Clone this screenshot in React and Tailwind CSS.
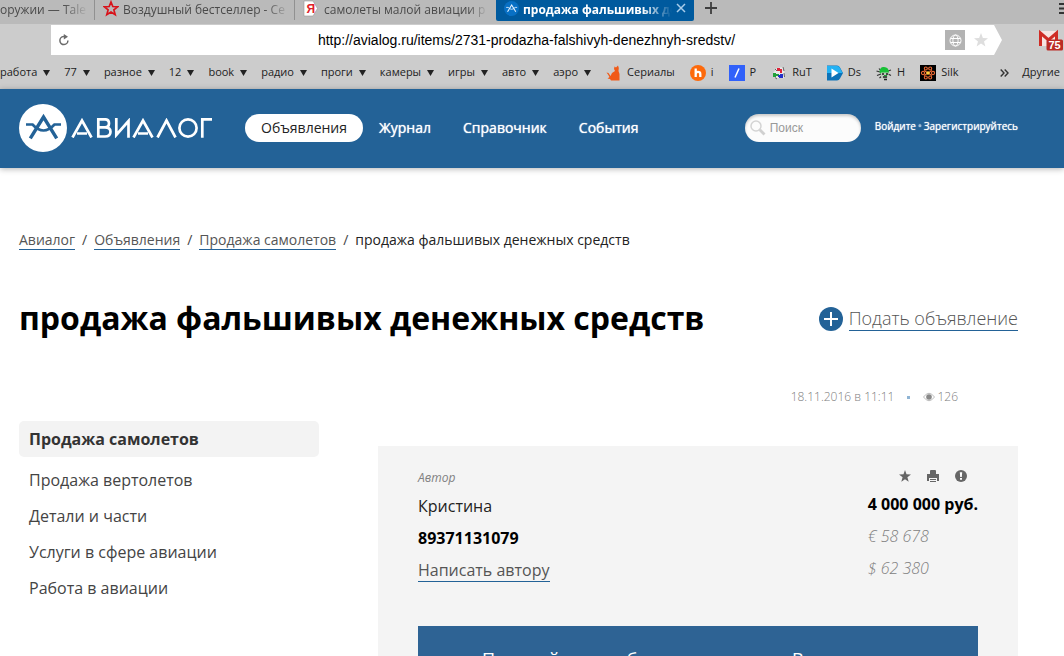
import React from "react";

const folders = ["работа", "77", "разное", "12", "book", "радио", "проги", "камеры", "игры", "авто", "аэро"];

function AvialogMark({ className, ring, mark }) {
  return (
    <svg className={className} viewBox="0 0 48 48" aria-hidden="true">
      <circle cx="24" cy="24" r="24" fill={ring} />
      <g fill="none" stroke={mark}>
        <path d="M11.300 34.300 L24.500 13 L37.700 34.300" strokeWidth="3.400" strokeLinejoin="miter" />
        <path d="M7 20.500 H13.500 Q24.500 32.500 35.500 20.500 H42" strokeWidth="2.600" />
      </g>
    </svg>
  );
}

function LogoWord() {
  return (
    <svg className="ml-1 h-5 w-[142px]" viewBox="0 0 142 20" role="img" aria-label="Авиалог">
      <g fill="none" stroke="#fff" strokeWidth="2.700">
        <path d="M1.500 19.500 L11 2.500 L20.500 19.500 M6 15.500 H16" />
        <path d="M27.300 1.300 H34 Q38 1.300 38 5.300 Q38 9.300 34 9.300 H27.300 M34 9.300 Q39.500 9.300 39.500 13.800 Q39.500 18.500 34 18.500 H27.300 V0" />
        <path d="M45.300 0 V17 L57.500 3 V19.800" />
        <path d="M62.500 19.500 L72 2.500 L81.500 19.500 M67 15.500 H77" />
        <path d="M86.500 19.500 L95.500 2.500 L104.500 19.500" />
        <circle cx="117" cy="10" r="8.600" />
        <path d="M131.300 19.800 V1.300 H141" />
      </g>
    </svg>
  );
}

function TabDivider() {
  return <span className="h-5 w-px shrink-0 bg-[#919191]" />;
}

function TabStrip() {
  return (
    <div className="flex h-6 items-start bg-[#bababa] text-xs leading-5 text-[#4a4a4a]">
      <button className="w-[94px] shrink-0 whitespace-nowrap pr-1 text-left">
        <span className="block [mask-image:linear-gradient(to_right,black_70%,transparent_98%)]">оружии — Tale</span>
      </button>
      <TabDivider />
      <button className="flex w-[199px] shrink-0 items-start gap-1 whitespace-nowrap pl-2 pr-1 text-left">
        <svg className="h-[17px] w-4 shrink-0" viewBox="0 0 16 17" aria-hidden="true">
          <path d="M8 2 L9.800 6.500 L14.700 6.800 L10.900 9.900 L12.200 14.700 L8 12 L3.800 14.700 L5.100 9.900 L1.300 6.800 L6.200 6.500 Z" fill="none" stroke="#d8131b" strokeWidth="1.700" />
        </svg>
        <span className="min-w-0 flex-1 [mask-image:linear-gradient(to_right,black_85%,transparent_100%)]">Воздушный бестселлер - Се</span>
      </button>
      <TabDivider />
      <button className="flex w-[201px] shrink-0 items-start gap-[6px] whitespace-nowrap pl-2 pr-2 text-left">
        <svg className="h-[17px] w-[15px] shrink-0" viewBox="0 0 15 17" aria-hidden="true">
          <path d="M1 1 H10 L14.500 8.500 L10 16 H1 Z" fill="#fff" stroke="#999" strokeWidth=".6" />
          <text x="3.500" y="13" fontSize="12" fontWeight="bold" fill="#e0202a" fontFamily="Liberation Sans, sans-serif">Я</text>
        </svg>
        <span className="min-w-0 flex-1 [mask-image:linear-gradient(to_right,black_88%,transparent_100%)]">самолеты малой авиации р</span>
      </button>
      <button className="flex h-[21px] w-[198px] shrink-0 items-start gap-1 whitespace-nowrap rounded-b-xs bg-[#005a9e] px-2 text-left font-bold text-white">
        <AvialogMark className="mt-px h-[15px] w-[15px] shrink-0" ring="#0870c4" mark="#e8f4ff" />
        <span className="min-w-0 flex-1 [mask-image:linear-gradient(to_right,black_80%,transparent_100%)]">продажа фальшивых де</span>
        <svg className="mt-[3px] h-[10px] w-[10px] shrink-0" viewBox="0 0 10 10" aria-hidden="true">
          <path d="M1 1 L9 9 M9 1 L1 9" stroke="#a9cdea" strokeWidth="1.500" />
        </svg>
      </button>
      <button aria-label="Новая вкладка" className="ml-[11px] mt-[2px]">
        <svg className="h-[12px] w-[12px]" viewBox="0 0 12 12" aria-hidden="true">
          <path d="M6 0 V12 M0 6 H12" stroke="#3e3e3e" strokeWidth="1.800" />
        </svg>
      </button>
      <button aria-label="Меню" className="ml-auto mt-[3px]">
        <svg className="h-[11px] w-[5px]" viewBox="0 0 5 11" aria-hidden="true">
          <path d="M0 1 H5 M0 5.500 H5 M0 10 H5" stroke="#333" strokeWidth="2" />
        </svg>
      </button>
    </div>
  );
}

function AddressBar() {
  return (
    <div className="flex h-8 items-center bg-[#cccccc] pl-[51px]">
      <div className="flex h-[30px] flex-1 items-center bg-white [clip-path:polygon(0_0,calc(100%-8px)_0,100%_50%,calc(100%-8px)_100%,0_100%)]">
        <button aria-label="Обновить" className="flex w-[60px] pl-[7px]">
          <svg className="h-3 w-3" viewBox="0 0 12 12" aria-hidden="true">
            <path d="M7.500 2.600 H5.500 A4 4 0 1 0 9.900 6.500" fill="none" stroke="#6b6b6b" strokeWidth="1.500" />
            <path d="M5.800 0 L10 2.800 L5.800 5.500 Z" fill="#6b6b6b" />
          </svg>
        </button>
        <input
          aria-label="Адрес"
          className="min-w-0 flex-1 bg-transparent text-center font-['Liberation_Sans',Arial,sans-serif] text-sm text-black outline-none"
          defaultValue="http://avialog.ru/items/2731-prodazha-falshivyh-denezhnyh-sredstv/"
        />
        <div className="flex w-[60px] items-center gap-2 pl-[3px]">
          <button aria-label="Перевести" className="flex h-5 w-5 items-center justify-center bg-[#b3b3b3]">
            <svg className="h-[13px] w-[13px]" viewBox="0 0 13 13" aria-hidden="true">
              <g fill="none" stroke="#fff" strokeWidth="1">
                <circle cx="6.500" cy="6.500" r="5.500" />
                <ellipse cx="6.500" cy="6.500" rx="2.600" ry="5.500" />
                <path d="M1.500 4.500 H11.500 M1.500 8.500 H11.500" />
              </g>
            </svg>
          </button>
          <button aria-label="В избранное">
            <svg className="block h-4 w-4" viewBox="0 0 16 16" aria-hidden="true">
              <path d="M8 1 L9.900 6 L15 6.200 L11 9.400 L12.400 14.500 L8 11.600 L3.600 14.500 L5 9.400 L1 6.200 L6.100 6 Z" fill="#dedede" />
            </svg>
          </button>
        </div>
      </div>
      <button aria-label="Почта: 75 писем" className="ml-[37px]">
        <svg className="block h-[22px] w-[25px]" viewBox="0 0 25 22" aria-hidden="true">
          <rect x="0" y="2" width="19" height="15" rx="1" fill="#f6e4e2" />
          <path d="M1.500 17 V4 L9.500 11 L17.500 4 V12" fill="none" stroke="#cf2b24" strokeWidth="3" />
          <rect x="7.500" y="10.500" width="16.500" height="11" rx="1.500" fill="#bb2b25" />
          <text x="15.500" y="20" textAnchor="middle" fontSize="11" fontWeight="bold" fill="#fff" fontFamily="Liberation Sans, sans-serif">75</text>
        </svg>
      </button>
    </div>
  );
}

function Site({ icon, label }) {
  return (
    <a href="#site" className="flex shrink-0 items-center gap-[5px]">
      {icon}
      {label}
    </a>
  );
}

const catIcon = (
  <svg className="h-4 w-4" viewBox="0 0 16 16" aria-hidden="true">
    <path d="M8 4 L8.500 1.500 L10 2.500 L12 0.500 L12.800 3 L12.500 6 L13.500 9 L13.500 15.500 H5 L4 14 L1.500 13.500 L3.500 12 L2 9.500 L0.500 7.500 L2.500 8 L4.500 11 L6 8 L9 6 Z" fill="#f05a18" />
  </svg>
);
const orangeIcon = (
  <svg className="h-4 w-4" viewBox="0 0 16 16" aria-hidden="true">
    <circle cx="8" cy="8" r="8" fill="#fd6a0c" />
    <path d="M5.700 3.500 V12 M5.700 9 Q5.700 6.900 8 6.900 Q10.300 6.900 10.300 9 V12" fill="none" stroke="#fff" strokeWidth="2.300" />
  </svg>
);
const slashIcon = (
  <svg className="h-4 w-4" viewBox="0 0 16 16" aria-hidden="true">
    <rect width="16" height="16" fill="#3161fa" />
    <path d="M6 12.500 L10 3.500" stroke="#fff" strokeWidth="1.500" />
  </svg>
);
const rutIcon = (
  <svg className="h-4 w-4" viewBox="0 0 16 16" aria-hidden="true">
    <path d="M2 8 L6 3 L12 2 L13.500 7 L13 13 L6 13 Z" fill="#e8e8e8" />
    <path d="M6 3 h3 v1 h2 v4 h-2 v-2 h-3z" fill="#dd2338" />
    <path d="M2 8 h3 v1 h3 v2 h-3 v1 h-3z" fill="#22a03a" />
    <path d="M7 10 h2 v-1 h3 v4 h-4 v-1 h-1z" fill="#2330c8" />
    <path d="M12 2 l1 4 M13 8 l0.500 4 M4 4 l2 2 M4 12.500 l2 1.500" stroke="#666" />
  </svg>
);
const dsIcon = (
  <svg className="h-4 w-4" viewBox="0 0 16 16" aria-hidden="true">
    <path d="M0 0.500 H10 Q12 0.500 13 2.500 L16 8 L13 13.500 Q12 15.500 10 15.500 H0 Z" fill="#0c72b8" />
    <path d="M0 1 H10 Q12 1 13 3 L15.500 8 H0 Z" fill="#24b2f4" />
    <path d="M4.500 3.500 L11.500 8 L4.500 12.500 Z" fill="#fff" />
  </svg>
);
const hIcon = (
  <svg className="h-4 w-4" viewBox="0 0 16 16" aria-hidden="true">
    <path d="M0.500 6 L4 7 M1 10.500 L5 9 M12 6 L15 5 M12 9 L15 10.500 M3 3.500 L5 6 M3.500 13 L6 11" stroke="#333" strokeWidth="1.200" />
    <path d="M3.500 7 Q4 1.500 8 2 Q13 2 13 8 L10 9 L5 9 Z" fill="#18c035" />
    <path d="M5 7.500 h8 l-1 5 l-2 1.500 h-3 l-2 -2z" fill="#b9c9b9" />
    <path d="M6 9 h2 M10 9 h2 M7 12 h4 M8 14.500 h3" stroke="#222" strokeWidth="1.400" />
    <path d="M8 10.500 h3" stroke="#18a030" />
  </svg>
);
const silkIcon = (
  <svg className="h-4 w-4" viewBox="0 0 16 16" aria-hidden="true">
    <rect width="16" height="16" fill="#000" />
    <g fill="none" stroke="#ec6a34" strokeWidth="1.100">
      <circle cx="5.800" cy="3.500" r="1.500" />
      <circle cx="10.200" cy="3.500" r="1.500" />
      <circle cx="5.800" cy="12.500" r="1.500" />
      <circle cx="10.200" cy="12.500" r="1.500" />
      <circle cx="3" cy="8" r="1.600" />
      <circle cx="13" cy="8" r="1.600" />
      <path d="M4 5.500 L12 10.500 M12 5.500 L4 10.500" />
    </g>
    <circle cx="8" cy="8" r="1.800" fill="#ffd23c" />
  </svg>
);

function Bookmarks() {
  return (
    <nav aria-label="Закладки" className="flex h-[33px] items-center overflow-hidden whitespace-nowrap bg-[#cccccc] text-[11px] text-[#222222]">
      <div className="flex shrink-0 items-center gap-[14px]">
        {folders.map((name) => (
          <button key={name} className="flex items-center gap-[6px]">
            {name}
            <svg className="h-[6px] w-[7px]" viewBox="0 0 7 6" aria-hidden="true">
              <path d="M0 0 H7 L3.500 6 Z" fill="#222" />
            </svg>
          </button>
        ))}
      </div>
      <div className="ml-[15px] flex shrink-0 items-center gap-[15px]">
        <Site icon={catIcon} label="Сериалы" />
        <Site icon={orangeIcon} label="i" />
        <Site icon={slashIcon} label="P" />
        <Site icon={rutIcon} label="RuT" />
        <Site icon={dsIcon} label="Ds" />
        <Site icon={hIcon} label="H" />
        <Site icon={silkIcon} label="Silk" />
      </div>
      <button aria-label="Ещё закладки" className="ml-auto shrink-0">
        <svg className="h-2 w-[9px]" viewBox="0 0 9 8" aria-hidden="true">
          <path d="M0.700 0.500 L4 4 L0.700 7.500 M4.700 0.500 L8 4 L4.700 7.500" fill="none" stroke="#333" strokeWidth="1.400" />
        </svg>
      </button>
      <button className="ml-[13px] mr-1 shrink-0">Другие</button>
    </nav>
  );
}

function SiteHeader() {
  const navLink = "px-4 font-medium [text-shadow:0_0_1px_#ffffff]";
  return (
    <header className="flex h-[79px] items-center bg-[#236297] pb-[2px] pl-[19px] pr-[46px] text-sm text-white shadow-[0_1px_6px_rgba(0,0,0,0.3)]">
      <a href="#home" className="flex shrink-0 items-center">
        <AvialogMark className="h-12 w-12" ring="#fff" mark="#236297" />
        <LogoWord />
      </a>
      <nav className="ml-8 flex items-center">
        <a href="#items" className="flex h-7 items-center rounded-full bg-white px-4 text-[#222222]">Объявления</a>
        <a href="#journal" className={navLink}>Журнал</a>
        <a href="#reference" className={navLink}>Справочник</a>
        <a href="#events" className={navLink}>События</a>
      </nav>
      <label className="ml-auto flex h-7 w-[116px] shrink-0 items-center gap-1 rounded-full bg-[#fcfcfc] pl-[5px] shadow-[inset_0_2px_3px_rgba(0,0,0,0.2)]">
        <svg className="h-4 w-4 shrink-0" viewBox="0 0 16 16" aria-hidden="true">
          <circle cx="6" cy="6" r="5" fill="none" stroke="#d4d4d4" strokeWidth="1.500" />
          <path d="M9.800 9.800 L14.500 14.500" stroke="#d0d0d0" strokeWidth="2.800" />
        </svg>
        <input aria-label="Поиск" placeholder="Поиск" className="w-full min-w-0 bg-transparent font-['Liberation_Sans',Arial,sans-serif] text-xs outline-none placeholder:text-[#999999]" />
      </label>
      <div className="ml-[14px] flex shrink-0 gap-[2px] whitespace-nowrap pb-[2px] text-[10px] font-medium [text-shadow:0_0_1px_#ffffff]">
        <a href="#login">Войдите</a>
        <span className="text-[#9dbcd6]">•</span>
        <a href="#register">Зарегистрируйтесь</a>
      </div>
    </header>
  );
}

function Crumbs() {
  const link = "border-b border-[#236297] text-[#555555]";
  return (
    <nav aria-label="Навигация" className="mt-[63px] flex items-start gap-[7px] text-sm leading-[18px] text-[#444444]">
      <a href="#home" className={link}>Авиалог</a>
      <span>/</span>
      <a href="#items" className={link}>Объявления</a>
      <span>/</span>
      <a href="#planes" className={link}>Продажа самолетов</a>
      <span>/</span>
      <span className="text-[#222222]">продажа фальшивых денежных средств</span>
    </nav>
  );
}

function Sidebar() {
  return (
    <nav aria-label="Разделы" className="w-[300px] shrink-0 text-base text-[#444444]">
      <a href="#planes" className="mb-[5px] flex h-9 items-center rounded-[5px] bg-[#f3f3f3] px-[10px] font-bold text-[#333333]">Продажа самолетов</a>
      {["Продажа вертолетов", "Детали и части", "Услуги в сфере авиации", "Работа в авиации"].map((t) => (
        <a key={t} href="#section" className="flex h-9 items-center px-[10px]">{t}</a>
      ))}
    </nav>
  );
}

function Actions() {
  return (
    <div className="flex h-3 gap-4 self-end pr-[11px]">
      <button aria-label="В избранное">
        <svg className="h-3 w-3" viewBox="0 0 12 12" aria-hidden="true">
          <path d="M6 0 L7.500 4.300 L12 4.500 L8.400 7.300 L9.700 11.700 L6 9.200 L2.300 11.700 L3.600 7.300 L0 4.500 L4.500 4.300 Z" fill="#666" />
        </svg>
      </button>
      <button aria-label="Печать">
        <svg className="h-3 w-3" viewBox="0 0 12 12" aria-hidden="true">
          <path d="M3 4 V1 Q3 0 4 0 H8 Q9 0 9 1 V4 Z M0 4 H1 V5 H11 V4 H12 V11 H10 V8 H2 V11 H0 Z M3 9 H9 V10 H3 Z M3 11 H9 V12 H3 Z M1 4 H11 V7 H1 Z" fill="#666" />
        </svg>
      </button>
      <button aria-label="Пожаловаться">
        <svg className="h-3 w-3" viewBox="0 0 12 12" aria-hidden="true">
          <circle cx="6" cy="6" r="6" fill="#666" />
          <path d="M4.800 2.300 H7.200 L6.800 7 H5.200 Z M5 8 H7 V9.700 H5 Z" fill="#fff" />
        </svg>
      </button>
    </div>
  );
}

function Listing() {
  return (
    <section className="flex-1 bg-[#f4f4f4] px-10 pb-10 pt-6">
      <div className="flex justify-between">
        <div className="flex flex-col items-start text-base leading-8 text-[#222222]">
          <span className="text-xs leading-4 italic text-[#808080]">Автор</span>
          <span className="mt-1">Кристина</span>
          <strong className="font-bold text-black">89371131079</strong>
          <a href="#write" className="mt-[5px] border-b border-[#236297] leading-[22px] text-[#555555]">Написать автору</a>
        </div>
        <div className="flex flex-col items-start text-base leading-8">
          <Actions />
          <strong className="mt-[6px] font-bold text-black">4 000 000 руб.</strong>
          <span className="font-light italic text-[#808080]">€ 58 678</span>
          <span className="font-light italic text-[#808080]">$ 62 380</span>
        </div>
      </div>
      <p className="mt-[42px] bg-[#2e6394] px-10 py-5 text-center text-lg leading-[26px] text-white">
        Пожалуйста, сообщите автору, что Вы нашли это объявление на Авиалоге
      </p>
    </section>
  );
}

export default function App() {
  return (
    <div className="h-screen overflow-hidden bg-white font-['Open_Sans','Noto_Sans',sans-serif]">
      <TabStrip />
      <AddressBar />
      <Bookmarks />
      <SiteHeader />
      <main className="pl-[19px] pr-[46px]">
        <Crumbs />
        <div className="mt-[45px] flex items-center justify-between">
          <h1 className="text-[32px] leading-[46px] font-bold text-black">продажа фальшивых денежных средств</h1>
          <a href="#add" className="flex items-end gap-[6px] text-lg font-light text-[#555555]">
            <svg className="h-6 w-6" viewBox="0 0 24 24" aria-hidden="true">
              <circle cx="12" cy="12" r="12" fill="#236297" />
              <path d="M12 5 V19 M5 12 H19" stroke="#fff" strokeWidth="2" />
            </svg>
            <span className="border-b border-[#236297] leading-6">Подать объявление</span>
          </a>
        </div>
        <div className="mt-12 flex h-4 items-center justify-end pr-[60px] text-xs leading-4 font-light text-[#808080]">
          <time>18.11.2016 в 11:11</time>
          <span className="mx-[13px] h-[3px] w-[3px] bg-[#8fb4d4]" />
          <svg className="mr-[2px] h-3 w-3" viewBox="0 0 12 12" aria-hidden="true">
            <path d="M0.500 6 Q6 -1.500 11.500 6 Q6 13.500 0.500 6 Z" fill="#fff" stroke="#bbb" />
            <circle cx="6" cy="6" r="2.800" fill="#888" />
          </svg>
          <span>126</span>
        </div>
        <div className="mt-4 flex gap-[59px]">
          <Sidebar />
          <div className="flex flex-1 pt-[25px]">
            <Listing />
          </div>
        </div>
      </main>
    </div>
  );
}
